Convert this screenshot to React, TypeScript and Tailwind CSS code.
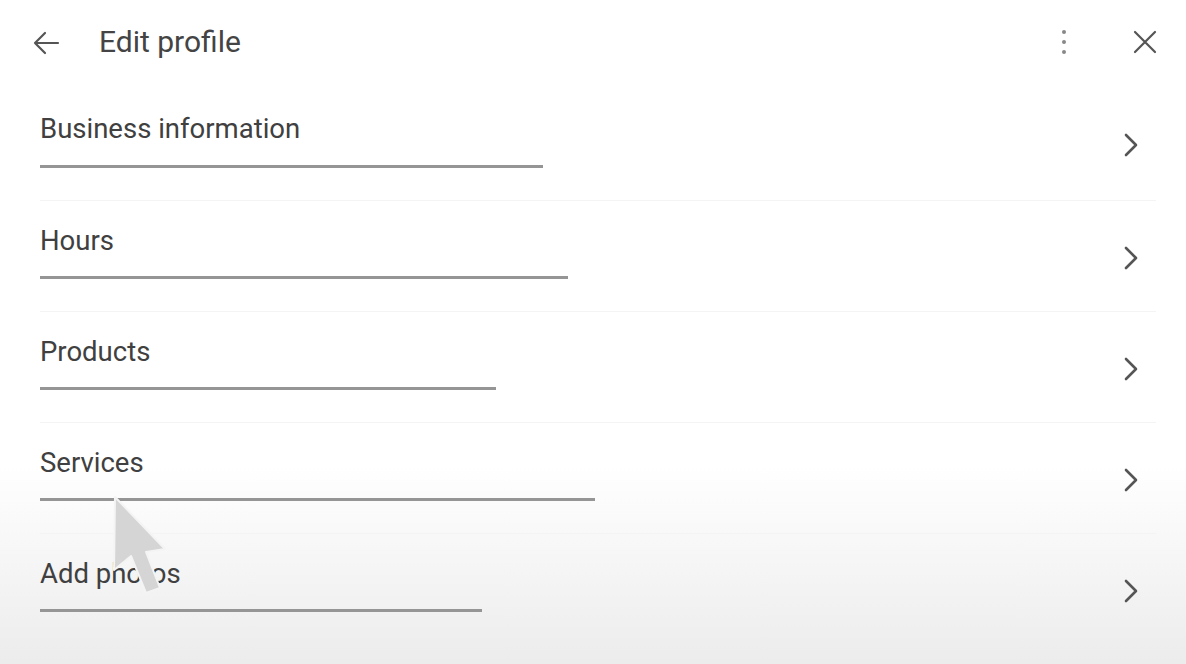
import React from 'react';

const rows = [
  { label: 'Business information', line: 'w-[503px]' },
  { label: 'Hours', line: 'w-[528px]' },
  { label: 'Products', line: 'w-[456px]' },
  { label: 'Services', line: 'w-[555px]' },
  { label: 'Add photos', line: 'w-[442px]' },
];

function Chevron() {
  return (
    <svg width="18" height="24" viewBox="0 0 18 24" fill="none" stroke="#555" strokeWidth="2.6" strokeLinecap="round" strokeLinejoin="round">
      <path d="M4 2 L14 12 L4 22" />
    </svg>
  );
}

export default function App() {
  return (
    <div className="relative w-[1186px] h-[664px] overflow-hidden bg-gradient-to-b from-white via-white via-70% to-[#ececec] font-['Roboto','Liberation_Sans',sans-serif] text-[#3c3c3c]">
      {/* Header */}
      <div className="flex items-center h-[86px] pl-[32px] pr-[28px]">
        <svg width="28" height="26" viewBox="0 0 28 26" fill="none" stroke="#555" strokeWidth="2.2" strokeLinecap="round" strokeLinejoin="round">
          <path d="M26 13 H3 M13 3 L3 13 L13 23" />
        </svg>
        <h1 className="ml-[39px] text-[30px] leading-none text-[#444] -mt-[2px]">Edit profile</h1>
        <div className="flex-1" />
        <div className="flex flex-col gap-[6px] -mt-[2px]">
          <span className="w-[4px] h-[4px] rounded-full bg-[#888]" />
          <span className="w-[4px] h-[4px] rounded-full bg-[#888]" />
          <span className="w-[4px] h-[4px] rounded-full bg-[#888]" />
        </div>
        <svg className="ml-[66px] -mt-[2px]" width="26" height="26" viewBox="0 0 26 26" fill="none" stroke="#555" strokeWidth="2.2" strokeLinecap="round">
          <path d="M3 3 L23 23 M23 3 L3 23" />
        </svg>
      </div>

      {/* Rows */}
      <div className="flex flex-col pl-[40px] pr-[30px]">
        {rows.map((row, i) => (
          <div
            key={row.label}
            className={`flex items-start ${i === 0 ? 'h-[114px]' : 'h-[111px] border-t border-[#f4f4f4]'}`}
          >
            <div className="flex flex-col flex-1">
              <div className={`${i === 0 ? 'pt-[27px]' : 'pt-[24px]'} text-[27.5px] leading-[32px] text-[#404040]`}>{row.label}</div>
              <div className={`${i === 0 ? 'mt-[20px]' : 'mt-[19px]'} h-[3px] bg-[#959595] ${row.line}`} />
            </div>
            <div className={`${i === 0 ? 'mt-[47px]' : 'mt-[45px]'} mr-[16px]`}>
              <Chevron />
            </div>
          </div>
        ))}
      </div>

      {/* Mouse cursor */}
      <svg className="absolute left-[108px] top-[494px]" width="64" height="104" viewBox="0 0 64 104">
        <path d="M7 3 L6 76 L23 62 L38 99 L52 94 L38 58 L57 55 Z" fill="#d5d5d5" stroke="#f4f4f4" strokeWidth="2" strokeLinejoin="round" />
      </svg>
    </div>
  );
}
